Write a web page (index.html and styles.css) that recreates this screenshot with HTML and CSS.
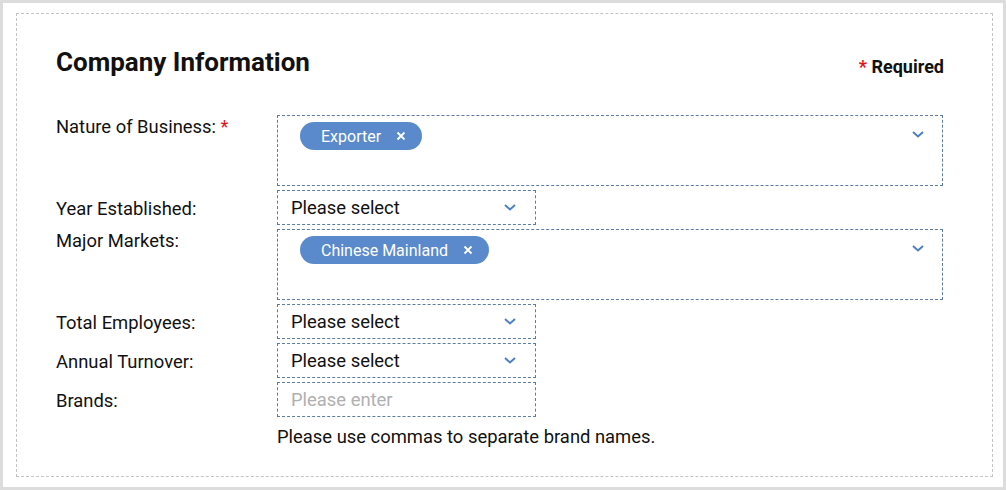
FILE: index.html
```html
<!DOCTYPE html>
<html lang="en">
<head>
    <meta charset="UTF-8">
    <meta name="viewport" content="width=device-width, initial-scale=1.0">
    <title>Company Information</title>
    <link rel="stylesheet" href="styles.css">
</head>
<body>
    <div class="panel">
        <div class="section">
            <div class="section-head">
                <h2 class="section-title">Company Information</h2>
                <span class="required-note"><span class="star">*</span> Required</span>
            </div>

            <div class="form-grid">
                <div class="label label-multi">Nature of Business: <span class="star">*</span></div>
                <div class="multi-select">
                    <span class="chip">Exporter
                        <svg class="chip-x" viewBox="0 0 10 10" width="10" height="10"><path d="M1.5 1.5l7 7M8.5 1.5l-7 7" stroke="currentColor" stroke-width="1.8"/></svg>
                    </span>
                    <svg class="chevron chevron-multi" viewBox="0 0 12 7" width="12" height="7"><path d="M1 1l5 4.5L11 1" fill="none" stroke="currentColor" stroke-width="2"/></svg>
                </div>

                <div class="label">Year Established:</div>
                <div class="select">
                    <span>Please select</span>
                    <svg class="chevron" viewBox="0 0 12 7" width="12" height="7"><path d="M1 1l5 4.5L11 1" fill="none" stroke="currentColor" stroke-width="2"/></svg>
                </div>

                <div class="label label-multi">Major Markets:</div>
                <div class="multi-select">
                    <span class="chip">Chinese Mainland
                        <svg class="chip-x" viewBox="0 0 10 10" width="10" height="10"><path d="M1.5 1.5l7 7M8.5 1.5l-7 7" stroke="currentColor" stroke-width="1.8"/></svg>
                    </span>
                    <svg class="chevron chevron-multi" viewBox="0 0 12 7" width="12" height="7"><path d="M1 1l5 4.5L11 1" fill="none" stroke="currentColor" stroke-width="2"/></svg>
                </div>

                <div class="label">Total Employees:</div>
                <div class="select">
                    <span>Please select</span>
                    <svg class="chevron" viewBox="0 0 12 7" width="12" height="7"><path d="M1 1l5 4.5L11 1" fill="none" stroke="currentColor" stroke-width="2"/></svg>
                </div>

                <div class="label">Annual Turnover:</div>
                <div class="select">
                    <span>Please select</span>
                    <svg class="chevron" viewBox="0 0 12 7" width="12" height="7"><path d="M1 1l5 4.5L11 1" fill="none" stroke="currentColor" stroke-width="2"/></svg>
                </div>

                <div class="label">Brands:</div>
                <div class="field-wrap">
                    <div class="select text-input"><span class="placeholder">Please enter</span></div>
                    <p class="hint">Please use commas to separate brand names.</p>
                </div>
            </div>
        </div>
    </div>
</body>
</html>
```

FILE: styles.css
```css
body {
    margin: 0;
    padding: 3px;
    background-color: #dcdcdc;
    font-family: Roboto, "Liberation Sans", sans-serif;
    color: #111;
}
.panel {
    width: 1000px;
    height: 484px;
    box-sizing: border-box;
    background-color: #fff;
    padding: 10px 10px 10px 13px;
}
.section {
    height: 100%;
    box-sizing: border-box;
    border: 1px dashed #c4c4c4;
    padding: 33px 48px 0 39px;
}
.section-head {
    display: flex;
    justify-content: space-between;
    align-items: flex-start;
    margin-bottom: 38px;
}
.section-title {
    margin: 0;
    font-size: 26px;
    font-weight: 700;
    line-height: 30px;
}
.required-note {
    margin-top: 10px;
    font-size: 18px;
    font-weight: 700;
    line-height: 20px;
}
.star {
    color: #e3141b;
}
.form-grid {
    display: grid;
    grid-template-columns: 221px 666px;
    row-gap: 4px;
}
.label {
    font-size: 18.4px;
    line-height: 20px;
    padding-top: 9px;
}
.label-multi {
    padding-top: 2px;
}
.select,
.multi-select {
    border: 1px dashed #5e7d9e;
    box-sizing: border-box;
}
.select {
    width: 259px;
    height: 35px;
    display: flex;
    align-items: center;
    justify-content: space-between;
    padding: 0 19px 0 13px;
    font-size: 18.4px;
}
.multi-select {
    height: 71px;
    display: flex;
    align-items: flex-start;
    justify-content: space-between;
    padding: 6px 18px 0 22px;
}
.chevron {
    color: #4f7fc0;
}
.chevron-multi {
    margin-top: 9px;
}
.chip {
    display: inline-flex;
    align-items: center;
    height: 28px;
    padding: 0 16px 0 21px;
    border-radius: 14px;
    background-color: #5a8acb;
    color: #fff;
    font-size: 16px;
}
.chip-x {
    margin-left: 15px;
}
.placeholder {
    color: #b0b0b0;
}
.hint {
    margin: 9px 0 0;
    font-size: 18.4px;
}
```
